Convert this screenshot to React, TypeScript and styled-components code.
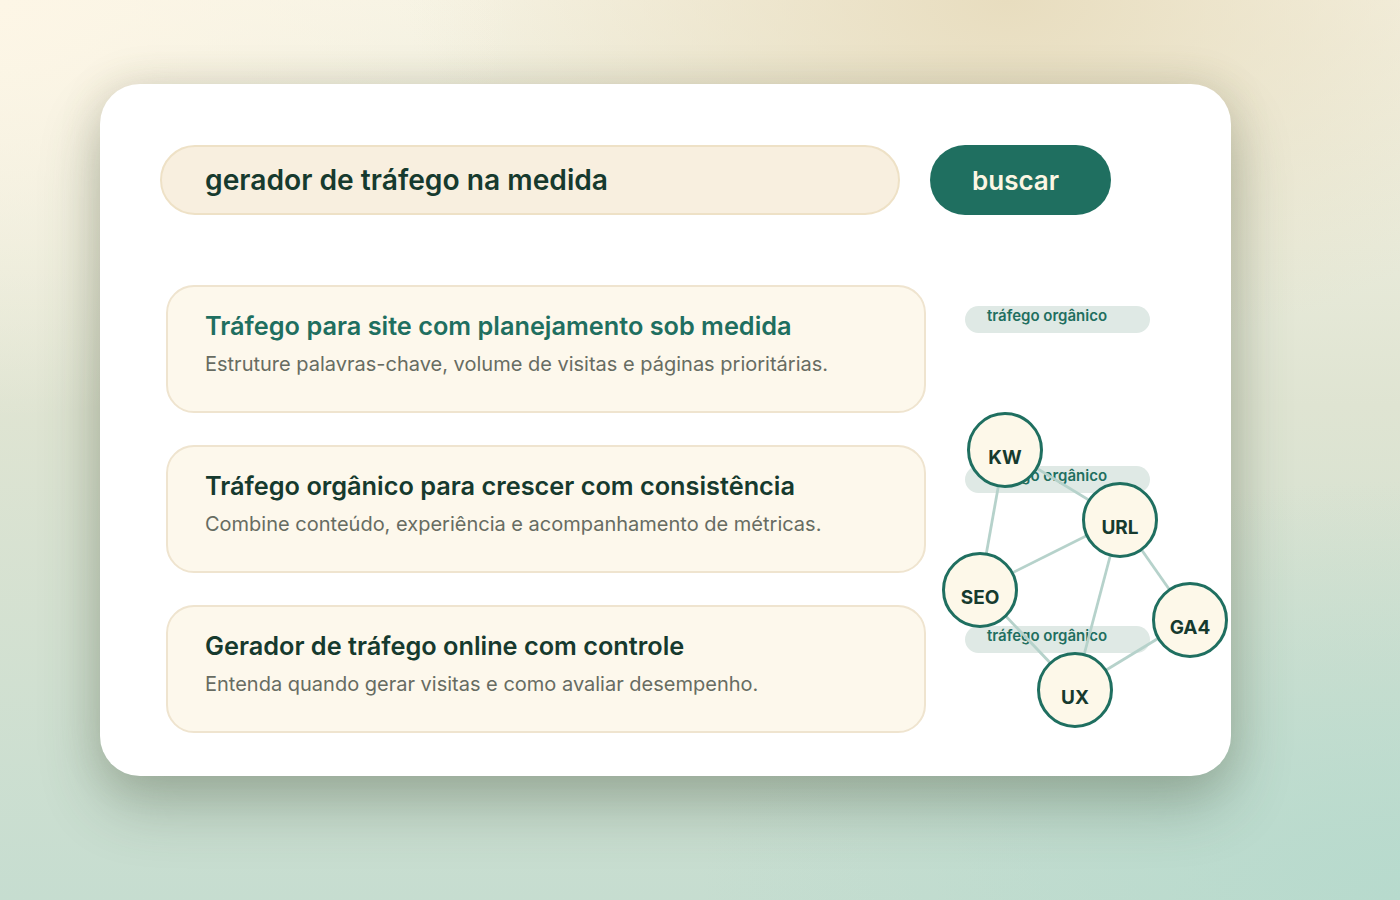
import React from 'react';
import styled, { createGlobalStyle } from 'styled-components';

const GlobalStyle = createGlobalStyle`
  * { box-sizing: border-box; }
  html, body { margin: 0; padding: 0; }
  body {
    font-family: Inter, "Noto Sans", "Liberation Sans", sans-serif;
    width: 1400px;
    height: 900px;
    overflow: hidden;
    background:
      radial-gradient(ellipse 520px 420px at 0% 0%, #fdf6e6 0%, rgba(253,246,230,0) 100%),
      radial-gradient(ellipse 600px 360px at 72% 0%, #e8ddbf 0%, rgba(232,221,191,0) 100%),
      radial-gradient(ellipse 700px 420px at 100% 100%, #b7dacd 0%, rgba(183,218,205,0) 100%),
      linear-gradient(180deg, #f6f3e4 0%, #dfe4d2 45%, #c6ddd0 100%);
  }
`;

const Page = styled.div`
  padding: 84px 0 0 100px;
`;

const Panel = styled.main`
  width: 1131px;
  height: 692px;
  background: #ffffff;
  border-radius: 40px;
  padding: 61px 0 0 60px;
  box-shadow:
    0 30px 60px rgba(60, 80, 60, 0.32),
    0 0 40px rgba(120, 110, 70, 0.18);
`;

const SearchRow = styled.div`
  display: flex;
  gap: 30px;
  align-items: center;
`;

const SearchField = styled.div`
  width: 740px;
  height: 70px;
  border-radius: 35px;
  background: #f8efdf;
  border: 2px solid #eee1c6;
  display: flex;
  align-items: center;
  padding-left: 43px;
  font-size: 28.2px;
  font-weight: 600;
  color: #163a2e;
`;

const SearchButton = styled.button`
  width: 181px;
  height: 70px;
  border: none;
  border-radius: 35px;
  background: #1f6f60;
  color: #fcf6e3;
  font-family: inherit;
  font-size: 26px;
  font-weight: 600;
  text-align: left;
  padding-left: 42px;
`;

const Results = styled.section`
  position: relative;
  margin: 70px 0 0 6px;
  display: grid;
  grid-template-columns: 760px 185px;
  column-gap: 39px;
  row-gap: 32px;
`;

const ResultCard = styled.article`
  height: 128px;
  border-radius: 28px;
  background: #fdf8ec;
  border: 2px solid #efe4cf;
  padding: 23px 0 0 37px;
`;

const ResultTitle = styled.h2<{ $accent?: boolean }>`
  margin: 0;
  font-size: 25.3px;
  line-height: 32px;
  font-weight: 600;
  color: ${(p) => (p.$accent ? '#1f6f60' : '#163a2e')};
`;

const ResultText = styled.p`
  margin: 9px 0 0;
  font-size: 20px;
  line-height: 26px;
  color: #676c62;
`;

const Tag = styled.span`
  align-self: start;
  margin-top: 21px;
  height: 27px;
  border-radius: 14px;
  background: #dfe9e5;
  color: #1f6f60;
  font-size: 15px;
  font-weight: 600;
  padding: 0 0 0 22px;
  line-height: 20px;
`;

const Graph = styled.div`
  position: absolute;
  left: 779px;
  top: 124px;
  width: 290px;
  height: 320px;
`;

const Edges = styled.svg`
  position: absolute;
  left: 0;
  top: 0;
  overflow: visible;
`;

const Node = styled.div`
  position: absolute;
  width: 76px;
  height: 76px;
  margin: -37px 0 0 -38px;
  border-radius: 50%;
  border: 3px solid #1f6f60;
  background: #fdf8e9;
  display: flex;
  align-items: center;
  justify-content: center;
  padding-top: 15px;
  font-size: 19px;
  font-weight: 700;
  color: #163a2e;
`;

const results = [
  {
    title: 'Tráfego para site com planejamento sob medida',
    text: 'Estruture palavras-chave, volume de visitas e páginas prioritárias.',
    accent: true,
  },
  {
    title: 'Tráfego orgânico para crescer com consistência',
    text: 'Combine conteúdo, experiência e acompanhamento de métricas.',
  },
  {
    title: 'Gerador de tráfego online com controle',
    text: 'Entenda quando gerar visitas e como avaliar desempenho.',
  },
];

const nodes: Record<string, [number, number]> = {
  KW: [60, 40],
  URL: [175, 110],
  SEO: [35, 180],
  GA4: [245, 210],
  UX: [130, 280],
};

const links: [string, string][] = [
  ['KW', 'SEO'],
  ['KW', 'URL'],
  ['URL', 'SEO'],
  ['URL', 'UX'],
  ['URL', 'GA4'],
  ['SEO', 'UX'],
  ['GA4', 'UX'],
];

const App: React.FC = () => {
  return (
    <Page>
      <GlobalStyle />
      <Panel>
        <SearchRow>
          <SearchField>gerador de tráfego na medida</SearchField>
          <SearchButton>buscar</SearchButton>
        </SearchRow>
        <Results>
          {results.map((r) => (
            <React.Fragment key={r.title}>
              <ResultCard>
                <ResultTitle $accent={r.accent}>{r.title}</ResultTitle>
                <ResultText>{r.text}</ResultText>
              </ResultCard>
              <Tag>tráfego orgânico</Tag>
            </React.Fragment>
          ))}
          <Graph>
            <Edges width="290" height="320">
              {links.map(([a, b]) => (
                <line
                  key={a + b}
                  x1={nodes[a][0]}
                  y1={nodes[a][1]}
                  x2={nodes[b][0]}
                  y2={nodes[b][1]}
                  stroke="#b6d2cb"
                  strokeWidth="2.8"
                />
              ))}
            </Edges>
            {Object.entries(nodes).map(([label, [x, y]]) => (
              <Node key={label} style={{ left: x, top: y }}>
                {label}
              </Node>
            ))}
          </Graph>
        </Results>
      </Panel>
    </Page>
  );
};

export default App;
